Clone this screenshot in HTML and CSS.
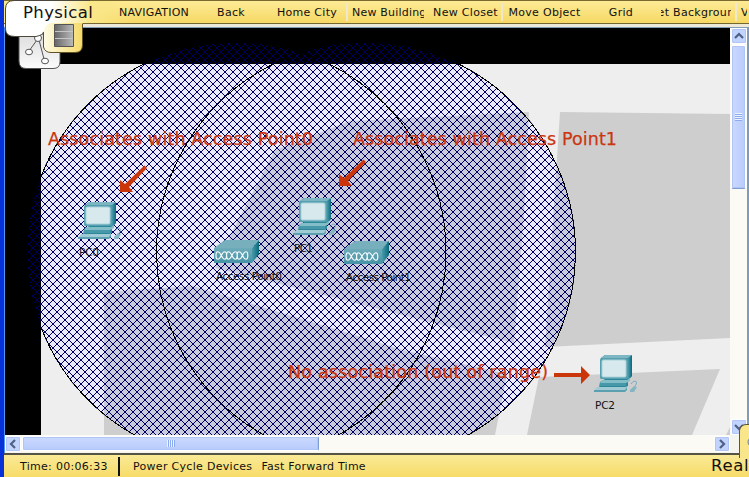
FILE: index.html
```
<!DOCTYPE html>
<html lang="en">
<head>
<meta charset="utf-8">
<title>Physical Workspace</title>
<link rel="stylesheet" href="styles.css">
</head>
<body>
<div class="window">
  <header class="toolbar">
    <span class="gap"></span>
    <span class="cell nav"><span>NAVIGATION</span></span>
    <span class="cell back"><span>Back</span></span>
    <span class="cell home"><span>Home City</span></span>
    <span class="cell left building sep"><span>New Building</span></span>
    <span class="cell closet"><span>New Closet</span></span>
    <span class="cell move sep"><span>Move Object</span></span>
    <span class="cell grid"><span>Grid</span></span>
    <span class="cell setbg"><span>Set Background</span></span>
    <span class="cell view sep"><span>Vo</span></span>
  </header>
  <main class="workspace">
    <svg class="map" width="725" height="407" viewBox="5 28 725 407">
      <defs>
        <pattern id="hatch" width="8" height="8" patternUnits="userSpaceOnUse" patternTransform="translate(5 28)">
          <path shape-rendering="crispEdges" d="M0 0h1v1h-1zM7 0h1v1h-1zM1 1h1v1h-1zM6 1h1v1h-1zM2 2h1v1h-1zM5 2h1v1h-1zM3 3h2v2h-2zM2 5h1v1h-1zM5 5h1v1h-1zM1 6h1v1h-1zM6 6h1v1h-1zM0 7h1v1h-1zM7 7h1v1h-1z"/>
        </pattern>
        <clipPath id="range"><circle cx="236.500" cy="252" r="210"/><circle cx="366" cy="252" r="210"/></clipPath>
        <clipPath id="paper"><path d="M41 64H730V435H41z"/></clipPath>
        <g id="blocks">
          <path d="M350 121L529 112L524 215L514 343L465 331L300 289L215 268L233 230L275 150z"/>
          <path d="M104 292L193 286L342 331L403 350L507 374L495 435H104z"/>
          <path d="M560 112L730 114V338L545 347L553 220z"/>
          <path d="M539 377L720 369L692 435H527z"/>
          <path d="M730 427V435H726z"/>
        </g>
        <linearGradient id="side" x2="1"><stop stop-color="#4a9aa9"/><stop offset="1" stop-color="#08697d"/></linearGradient>
        <linearGradient id="front" y2="1" x2="0"><stop stop-color="#6eabb9"/><stop offset="1" stop-color="#4592a6"/></linearGradient>
        <g id="pc">
          <path fill="#2c8799" d="M7 3L11 0H38V21L34 25V31L29 33H5L6 27L11 24L7 22z"/>
          <path fill="url(#side)" d="M34 3L38 0V21L34 25z"/>
          <path fill="#7bb6c2" d="M7 3L11 0H38L34 3z"/>
          <rect x="6" y="3" width="28" height="21" rx="1.500" fill="#559fae"/>
          <rect x="7.500" y="4.500" width="25" height="18" rx="2" fill="#aad2da"/>
          <rect x="8.500" y="5.500" width="23" height="16" rx="1.500" fill="#d8e9ee"/>
          <path fill="#83bdc8" d="M8 25H33L36 23V26L32 28H6z"/>
          <path fill="#4798a9" d="M6 28H32V31H6z"/>
          <path fill="#a0cbd4" d="M3 32H33L31 36H0z"/>
          <path fill="#5b9fb1" d="M0 35H31L33 32V35L31 37H0z"/>
          <path fill="none" stroke="#79adba" d="M37 29C40 24 45 26 41 31"/>
          <path fill="#83b5c3" d="M36 35L40 31L43 32L40 37L36 37z"/>
        </g>
        <g id="ap">
          <path fill="#78afbd" d="M0 8L11 0H45L38 8z"/>
          <path fill="url(#side)" d="M38 8L45 0V14L38 23z"/>
          <path fill="url(#front)" d="M0 8H38V23H0z"/>
          <path class="wave" d="M2 15.500c0-5 3-5 5.300 0s5.300 5 5.300 0s3-5 5.300 0s5.300 5 5.300 0s3-5 5.300 0s5.300 5 5.300 0M2 15.500c0 5 3 5 5.300 0s5.300-5 5.300 0s3 5 5.300 0s5.300-5 5.300 0s3 5 5.300 0s5.300-5 5.300 0"/>
        </g>
      </defs>
      <path d="M5 28H730V435H5z"/>
      <g clip-path="url(#paper)">
        <path fill="#eee" d="M41 64H730V435H41z"/>
        <use href="#blocks" fill="#cecece"/>
        <g clip-path="url(#range)">
          <path fill="#eaeafc" d="M41 64H730V435H41z"/>
          <use href="#blocks" fill="#cacadd"/>
        </g>
      </g>
      <g clip-path="url(#range)">
        <path fill="url(#hatch)" d="M5 28H730V435H5z"/>
      </g>
      <g class="outline">
        <circle cx="236.500" cy="252" r="209.500"/>
        <circle cx="366" cy="252" r="209.500"/>
      </g>
      <use href="#pc" x="78" y="202"/>
      <use href="#pc" x="293" y="198"/>
      <use href="#pc" x="594" y="355"/>
      <use href="#ap" x="214" y="240"/>
      <use href="#ap" x="344" y="241"/>
      <g class="label">
        <text x="79" y="256" textLength="20">PC0</text>
        <text x="294" y="252" textLength="19">PC1</text>
        <text x="595" y="409" textLength="20">PC2</text>
        <text x="216" y="280" textLength="66">Access Point0</text>
        <text x="346" y="281" textLength="65">Access Point1</text>
      </g>
      <g class="note">
        <text x="48" y="145" textLength="265">Associates with Access Point0</text>
        <text x="353" y="145" textLength="264">Associates with Access Point1</text>
        <text x="288" y="378" textLength="260">No association (out of range)</text>
      </g>
      <g class="arrow">
        <path d="M144.500 165.500L147 168L129 187L133 192H120V180L125 184z"/>
        <path d="M363.500 159.500L366 162L348 181L352 186H339V174L344 178z"/>
        <path d="M554 373H581V366L590 375L581 384V377H554z"/>
      </g>
    </svg>
    <div class="vbar">
      <span class="btn"><svg width="12" height="12" viewBox="0 0 12 12"><path d="M2 8L6 4L10 8"/></svg></span>
      <span class="thumb"><i class="grip"></i></span>
      <span class="track"></span>
      <span class="btn"><svg width="12" height="12" viewBox="0 0 12 12"><path d="M2 4L6 8L10 4"/></svg></span>
    </div>
    <div class="hbar">
      <span class="btn"><svg width="12" height="12" viewBox="0 0 12 12"><path d="M8 2L4 6L8 10"/></svg></span>
      <span class="thumb"><i class="grip"></i></span>
      <span class="track"></span>
      <span class="btn"><svg width="12" height="12" viewBox="0 0 12 12"><path d="M4 2L8 6L4 10"/></svg></span>
    </div>
  </main>
  <footer class="status">
    <span class="time">Time: 00:06:33</span>
    <span class="power">Power Cycle Devices</span>
    <span class="fast">Fast Forward Time</span>
  </footer>
</div>
<svg class="tab" width="90" height="72" viewBox="0 0 90 72">
  <defs>
    <linearGradient id="white" x2="1"><stop offset=".35" stop-color="#fff"/><stop offset="1" stop-color="#fff" stop-opacity="0"/></linearGradient>
    <linearGradient id="gold" x2="1"><stop stop-color="#fffbe5"/><stop offset="1" stop-color="#f5da68"/></linearGradient>
    <linearGradient id="pale" x2="0" y2="1"><stop stop-color="#ddd"/><stop offset="1" stop-color="#fbfbfb"/></linearGradient>
    <linearGradient id="rack" x2="1"><stop stop-color="#666"/><stop offset="1" stop-color="#bbb"/></linearGradient>
  </defs>
  <path d="M19 34H60V62Q60 68.500 53 68.500H26Q19 68.500 19 61z" fill="url(#pale)" stroke="#555"/>
  <g fill="#fff" stroke="#555"><path fill="none" d="M37 40L29 51M39 40L44 59"/><circle cx="38" cy="38" r="3.500"/><ellipse cx="29" cy="52" rx="3.500" ry="2.800"/><ellipse cx="45" cy="61" rx="3.500" ry="2.800"/></g>
  <path d="M43.500 22V47Q45 52.500 51 52.500H75Q82.500 52.500 82.500 45V22z" fill="url(#gold)"/>
  <path d="M43.500 32V47Q45 52.500 51 52.500H75Q82.500 52.500 82.500 45V24" fill="none" stroke="#5e5126"/>
  <path d="M44 1H14Q5.500 1 5.500 9V29Q5.500 36.500 15 36.500H36Q43 35 43.500 32L44 26z" fill="#fff"/>
  <path d="M43 1H90V23H54Q45 23 43.500 31z" fill="#fae789"/>
  <path d="M30 1H90V23H54Q45 23 43.500 32H30z" fill="url(#white)"/>
  <path d="M90 .500H14Q5.500 .500 5.500 9V29Q5.500 36.500 15 36.500H36Q43 35 43.500 32" fill="none" stroke="#4c483c"/>
  <path d="M54.500 24.500H73.500V46.500H54.500z" fill="url(#rack)" stroke="#555"/>
  <path d="M55 31.500H73M55 38.500H73" stroke="#c5c5c5"/>
</svg>
<span class="tab-name">Physical</span>
<span class="real-tab"></span>
<span class="real">Realtime</span>
</body>
</html>
```
FILE: styles.css
```
body {
  margin: 0;
  width: 749px;
  height: 477px;
  overflow: hidden;
  position: relative;
  font: 11px "DejaVu Sans", Verdana, sans-serif;
  color: #111;
}
.window {
  box-sizing: border-box;
  width: 749px;
  height: 477px;
  border-left: 4px solid;
  border-image: linear-gradient(90deg, #0831d9, #1660ee) 1;
  border-width: 0 0 0 4px;
  display: flex;
  flex-direction: column;
  background: #ece9d8;
}
.toolbar {
  box-sizing: border-box;
  height: 24px;
  border-top: 1px solid #7b6a2d;
  border-bottom: 1px solid #75652f;
  background: linear-gradient(90deg, #fae789 86px, transparent 130px), linear-gradient(#fdeb96, #f6d865);
  display: flex;
  align-items: center;
  white-space: nowrap;
}
.gap { width: 114px; flex: none; }
.cell {
  box-sizing: border-box;
  flex: none;
  height: 18px;
  line-height: 19px;
  display: flex;
  justify-content: center;
  overflow: hidden;
  letter-spacing: .3px;
}
.sep { border-left: 2px solid #eee9ce; }
.nav { width: 70px; margin-left: 1px; letter-spacing: .2px; }
.back { width: 84px; }
.home { width: 68px; margin: 0 5px 0 0; }
.building { width: 78px; padding-left: 4px; margin-right: 8px; letter-spacing: .2px; }
.left { justify-content: flex-start; }
.closet { width: 67px; margin-right: 2px; }
.move { width: 82px; padding-left: 3px; }
.grid { width: 76px; }
.setbg { width: 70px; margin: 0 4px 0 2px; }
.view { width: 12px; padding-left: 4px; justify-content: flex-start; }
.workspace {
  box-sizing: border-box;
  height: 429px;
  margin-top: 3px;
  border: 1px solid #7f9db9;
  border-right: 2px solid #7f9db9;
  border-left-color: #4f94f2;
  display: grid;
  grid-template: 407px 18px / 725px 17px;
  background: #f5f4ee;
}
.map { display: block; }
.outline { fill: none; stroke: #000; shape-rendering: crispEdges; }
#hatch path { fill: #000060; }
.label { font-size: 10.5px; fill: #111; }
.note { font-size: 17.5px; fill: #cb3510; stroke: #cb3510; stroke-width: .25px; }
.arrow { fill: #ca3509; }
.wave { fill: none; stroke: #f4fafb; stroke-width: 1.2; }
.vbar, .hbar { display: flex; background: #fbfaf5; box-sizing: border-box; }
.vbar { flex-direction: column; }
.hbar { height: 17px; padding-top: 1px; }
.track { flex: 1; }
.btn, .thumb {
  box-sizing: border-box;
  flex: none;
  border: 1px solid #fff;
  border-radius: 2px;
  background: #c2d3fd;
  box-shadow: inset 0 0 0 1px #b0c5f5;
  display: flex;
  align-items: center;
  justify-content: center;
}
.btn { width: 16px; height: 16px; }
.btn path { fill: none; stroke: #4d6185; stroke-width: 2.2; }
.vbar .btn { margin-left: 1px; }
.vbar .thumb { width: 15px; height: 144px; margin: 1px 0 0 1px; border-bottom-color: #7e9fd3; background: linear-gradient(90deg, #cbd9ff, #b7cbfb); }
.hbar .thumb { width: 297px; height: 15px; margin-left: 1px; border-right-color: #7e9fd3; background: linear-gradient(#cbd9ff, #b7cbfb); }
.grip { width: 7px; height: 8px; background: repeating-linear-gradient(#eef4ff 0 1px, #8caaf0 1px 2px); }
.hbar .grip { width: 8px; height: 7px; background: repeating-linear-gradient(90deg, #eef4ff 0 1px, #8caaf0 1px 2px); }
.status {
  box-sizing: border-box;
  height: 24px;
  margin-top: -3px;
  position: relative;
  border-top: 2px solid #555345;
  background: linear-gradient(#faea97, #f7dc69);
  flex: 1;
  display: flex;
  align-items: center;
  padding-left: 16px;
}
.time { width: 98px; height: 19px; line-height: 19px; border-right: 2px solid #111; letter-spacing: .3px; }
.power { margin: 0 9px 0 13px; letter-spacing: .3px; }
.fast { letter-spacing: .25px; }
.tab { position: absolute; left: 0; top: 0; }
.tab-name, .real { position: absolute; font-size: 16.5px; line-height: 20px; }
.tab-name { left: 23px; top: 3px; letter-spacing: .4px; }
.real { left: 711px; top: 456px; letter-spacing: .7px; }
.real-tab {
  position: absolute;
  box-sizing: border-box;
  left: 739px;
  top: 424px;
  width: 20px;
  height: 34px;
  border: solid #5d5639;
  border-width: 1px 0 0 1px;
  border-radius: 7px 0 0 0;
  background: radial-gradient(circle at 12px 17px, #bbb 3px, #888 4px, #fae68a 5px);
}
```
